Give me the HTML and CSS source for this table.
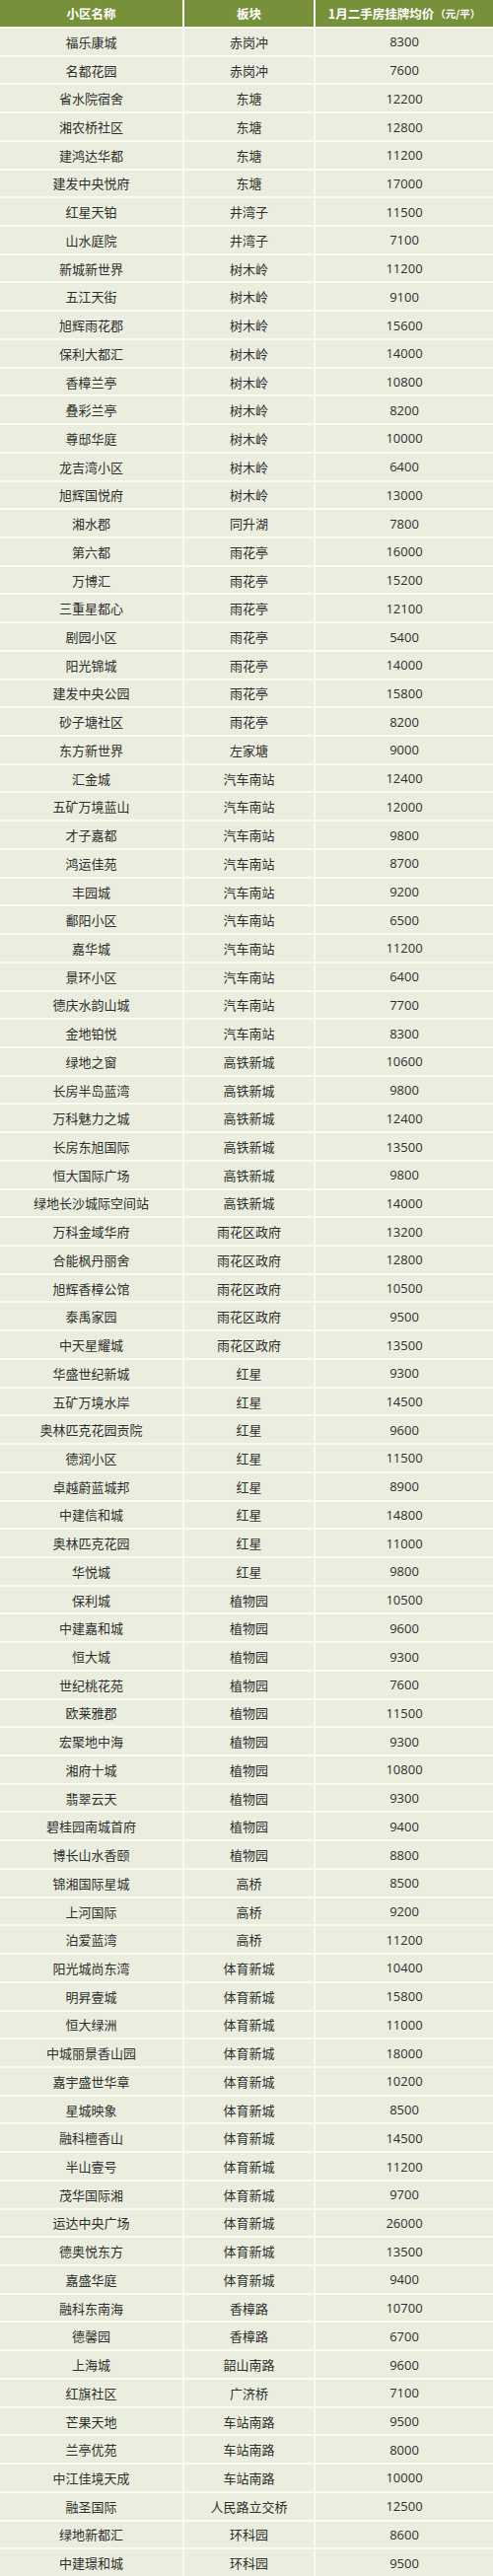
FILE: index.html
```html
<!DOCTYPE html>
<html lang="zh-CN">
<head>
<meta charset="utf-8">
<title>1月二手房挂牌均价</title>
<link rel="stylesheet" href="styles.css">
</head>
<body>
<div class="table">
<div class="hd">小区名称</div><div class="hd">板块</div><div class="hd">1月二手房挂牌均价<span class="unit">（元/平）</span></div>
<div class="c">福乐康城</div><div class="c">赤岗冲</div><div class="c n">8300</div>
<div class="c">名都花园</div><div class="c">赤岗冲</div><div class="c n">7600</div>
<div class="c">省水院宿舍</div><div class="c">东塘</div><div class="c n">12200</div>
<div class="c">湘农桥社区</div><div class="c">东塘</div><div class="c n">12800</div>
<div class="c">建鸿达华都</div><div class="c">东塘</div><div class="c n">11200</div>
<div class="c">建发中央悦府</div><div class="c">东塘</div><div class="c n">17000</div>
<div class="c">红星天铂</div><div class="c">井湾子</div><div class="c n">11500</div>
<div class="c">山水庭院</div><div class="c">井湾子</div><div class="c n">7100</div>
<div class="c">新城新世界</div><div class="c">树木岭</div><div class="c n">11200</div>
<div class="c">五江天街</div><div class="c">树木岭</div><div class="c n">9100</div>
<div class="c">旭辉雨花郡</div><div class="c">树木岭</div><div class="c n">15600</div>
<div class="c">保利大都汇</div><div class="c">树木岭</div><div class="c n">14000</div>
<div class="c">香樟兰亭</div><div class="c">树木岭</div><div class="c n">10800</div>
<div class="c">叠彩兰亭</div><div class="c">树木岭</div><div class="c n">8200</div>
<div class="c">尊邸华庭</div><div class="c">树木岭</div><div class="c n">10000</div>
<div class="c">龙吉湾小区</div><div class="c">树木岭</div><div class="c n">6400</div>
<div class="c">旭辉国悦府</div><div class="c">树木岭</div><div class="c n">13000</div>
<div class="c">湘水郡</div><div class="c">同升湖</div><div class="c n">7800</div>
<div class="c">第六都</div><div class="c">雨花亭</div><div class="c n">16000</div>
<div class="c">万博汇</div><div class="c">雨花亭</div><div class="c n">15200</div>
<div class="c">三重星都心</div><div class="c">雨花亭</div><div class="c n">12100</div>
<div class="c">剧园小区</div><div class="c">雨花亭</div><div class="c n">5400</div>
<div class="c">阳光锦城</div><div class="c">雨花亭</div><div class="c n">14000</div>
<div class="c">建发中央公园</div><div class="c">雨花亭</div><div class="c n">15800</div>
<div class="c">砂子塘社区</div><div class="c">雨花亭</div><div class="c n">8200</div>
<div class="c">东方新世界</div><div class="c">左家塘</div><div class="c n">9000</div>
<div class="c">汇金城</div><div class="c">汽车南站</div><div class="c n">12400</div>
<div class="c">五矿万境蓝山</div><div class="c">汽车南站</div><div class="c n">12000</div>
<div class="c">才子嘉都</div><div class="c">汽车南站</div><div class="c n">9800</div>
<div class="c">鸿运佳苑</div><div class="c">汽车南站</div><div class="c n">8700</div>
<div class="c">丰园城</div><div class="c">汽车南站</div><div class="c n">9200</div>
<div class="c">鄱阳小区</div><div class="c">汽车南站</div><div class="c n">6500</div>
<div class="c">嘉华城</div><div class="c">汽车南站</div><div class="c n">11200</div>
<div class="c">景环小区</div><div class="c">汽车南站</div><div class="c n">6400</div>
<div class="c">德庆水韵山城</div><div class="c">汽车南站</div><div class="c n">7700</div>
<div class="c">金地铂悦</div><div class="c">汽车南站</div><div class="c n">8300</div>
<div class="c">绿地之窗</div><div class="c">高铁新城</div><div class="c n">10600</div>
<div class="c">长房半岛蓝湾</div><div class="c">高铁新城</div><div class="c n">9800</div>
<div class="c">万科魅力之城</div><div class="c">高铁新城</div><div class="c n">12400</div>
<div class="c">长房东旭国际</div><div class="c">高铁新城</div><div class="c n">13500</div>
<div class="c">恒大国际广场</div><div class="c">高铁新城</div><div class="c n">9800</div>
<div class="c">绿地长沙城际空间站</div><div class="c">高铁新城</div><div class="c n">14000</div>
<div class="c">万科金域华府</div><div class="c">雨花区政府</div><div class="c n">13200</div>
<div class="c">合能枫丹丽舍</div><div class="c">雨花区政府</div><div class="c n">12800</div>
<div class="c">旭辉香樟公馆</div><div class="c">雨花区政府</div><div class="c n">10500</div>
<div class="c">泰禹家园</div><div class="c">雨花区政府</div><div class="c n">9500</div>
<div class="c">中天星耀城</div><div class="c">雨花区政府</div><div class="c n">13500</div>
<div class="c">华盛世纪新城</div><div class="c">红星</div><div class="c n">9300</div>
<div class="c">五矿万境水岸</div><div class="c">红星</div><div class="c n">14500</div>
<div class="c">奥林匹克花园贡院</div><div class="c">红星</div><div class="c n">9600</div>
<div class="c">德润小区</div><div class="c">红星</div><div class="c n">11500</div>
<div class="c">卓越蔚蓝城邦</div><div class="c">红星</div><div class="c n">8900</div>
<div class="c">中建信和城</div><div class="c">红星</div><div class="c n">14800</div>
<div class="c">奥林匹克花园</div><div class="c">红星</div><div class="c n">11000</div>
<div class="c">华悦城</div><div class="c">红星</div><div class="c n">9800</div>
<div class="c">保利城</div><div class="c">植物园</div><div class="c n">10500</div>
<div class="c">中建嘉和城</div><div class="c">植物园</div><div class="c n">9600</div>
<div class="c">恒大城</div><div class="c">植物园</div><div class="c n">9300</div>
<div class="c">世纪桃花苑</div><div class="c">植物园</div><div class="c n">7600</div>
<div class="c">欧莱雅郡</div><div class="c">植物园</div><div class="c n">11500</div>
<div class="c">宏聚地中海</div><div class="c">植物园</div><div class="c n">9300</div>
<div class="c">湘府十城</div><div class="c">植物园</div><div class="c n">10800</div>
<div class="c">翡翠云天</div><div class="c">植物园</div><div class="c n">9300</div>
<div class="c">碧桂园南城首府</div><div class="c">植物园</div><div class="c n">9400</div>
<div class="c">博长山水香颐</div><div class="c">植物园</div><div class="c n">8800</div>
<div class="c">锦湘国际星城</div><div class="c">高桥</div><div class="c n">8500</div>
<div class="c">上河国际</div><div class="c">高桥</div><div class="c n">9200</div>
<div class="c">泊爱蓝湾</div><div class="c">高桥</div><div class="c n">11200</div>
<div class="c">阳光城尚东湾</div><div class="c">体育新城</div><div class="c n">10400</div>
<div class="c">明昇壹城</div><div class="c">体育新城</div><div class="c n">15800</div>
<div class="c">恒大绿洲</div><div class="c">体育新城</div><div class="c n">11000</div>
<div class="c">中城丽景香山园</div><div class="c">体育新城</div><div class="c n">18000</div>
<div class="c">嘉宇盛世华章</div><div class="c">体育新城</div><div class="c n">10200</div>
<div class="c">星城映象</div><div class="c">体育新城</div><div class="c n">8500</div>
<div class="c">融科檀香山</div><div class="c">体育新城</div><div class="c n">14500</div>
<div class="c">半山壹号</div><div class="c">体育新城</div><div class="c n">11200</div>
<div class="c">茂华国际湘</div><div class="c">体育新城</div><div class="c n">9700</div>
<div class="c">运达中央广场</div><div class="c">体育新城</div><div class="c n">26000</div>
<div class="c">德奥悦东方</div><div class="c">体育新城</div><div class="c n">13500</div>
<div class="c">嘉盛华庭</div><div class="c">体育新城</div><div class="c n">9400</div>
<div class="c">融科东南海</div><div class="c">香樟路</div><div class="c n">10700</div>
<div class="c">德馨园</div><div class="c">香樟路</div><div class="c n">6700</div>
<div class="c">上海城</div><div class="c">韶山南路</div><div class="c n">9600</div>
<div class="c">红旗社区</div><div class="c">广济桥</div><div class="c n">7100</div>
<div class="c">芒果天地</div><div class="c">车站南路</div><div class="c n">9500</div>
<div class="c">兰亭优苑</div><div class="c">车站南路</div><div class="c n">8000</div>
<div class="c">中江佳境天成</div><div class="c">车站南路</div><div class="c n">10000</div>
<div class="c">融圣国际</div><div class="c">人民路立交桥</div><div class="c n">12500</div>
<div class="c">绿地新都汇</div><div class="c">环科园</div><div class="c n">8600</div>
<div class="c">中建璟和城</div><div class="c">环科园</div><div class="c n">9500</div>
</div>
</body>
</html>
```
FILE: styles.css
```css
html, body {
  margin: 0;
  padding: 0;
  background: #f9fbf0;
}

.table {
  width: 500px;
  height: 2612px;
  display: grid;
  grid-template-columns: 185px 131px 180px;
  grid-template-rows: 27px;
  grid-auto-rows: 1fr;
  gap: 2px;
  background: #f9fbf0;
  font-family: "Noto Sans CJK SC", "Microsoft YaHei", sans-serif;
  font-size: 13px;
  color: #2e2e2e;
}

.hd {
  background: #77913b;
  color: #ffffff;
  font-weight: bold;
  font-size: 12.5px;
  display: flex;
  align-items: center;
  justify-content: center;
  white-space: nowrap;
}

.unit {
  font-size: 10.5px;
  margin-left: 1px;
}

.c {
  background: #ebeedf;
  display: flex;
  align-items: center;
  justify-content: center;
  white-space: nowrap;
}

.n {
  font-family: "Open Sans", "Noto Sans", sans-serif;
  font-size: 13px;
}
```
